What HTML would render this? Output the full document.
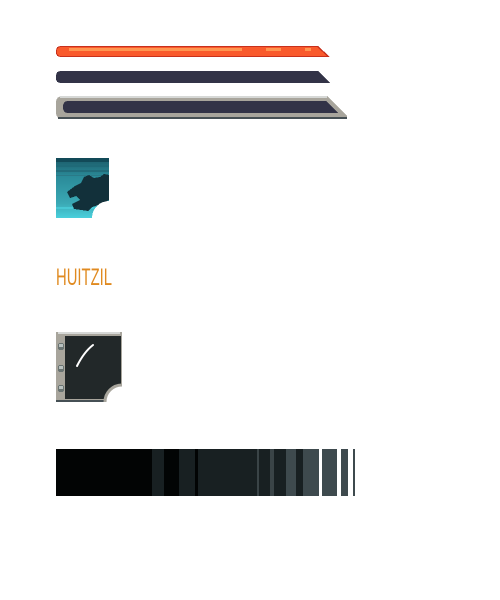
<!DOCTYPE html>
<html><head><meta charset="utf-8"><style>
html,body{margin:0;padding:0;background:#fff;width:500px;height:600px;overflow:hidden}
svg{position:absolute;left:0;top:0}
</style></head><body>
<svg width="500" height="600" viewBox="0 0 500 600" xmlns="http://www.w3.org/2000/svg" shape-rendering="crispEdges">
<!-- bar 1 -->
<path d="M61,46 H318 L330,57 H61 Q56,57 56,52 V51 Q56,46 61,46 Z" fill="#c8301c"/>
<path d="M61,47 H317 L327,56 H61 Q57,56 57,52 V51 Q57,47 61,47 Z" fill="#f95a2c"/>
<rect x="69" y="48" width="173" height="3" fill="#ff9550"/>
<rect x="266" y="48" width="15" height="3" fill="#ff9550"/>
<rect x="305" y="48" width="6" height="3" fill="#ff9550"/>
<!-- bar 2 -->
<path d="M61,71 H318 L330,83 H61 Q56,83 56,78 V76 Q56,71 61,71 Z" fill="#323347"/>
<!-- bar 3 -->
<path d="M63,96 H327 L347,116 V119 H63 Q56,119 56,112 V103 Q56,96 63,96 Z" fill="#a8a59c"/>
<rect x="60" y="96" width="267" height="2" fill="#d6d8d6"/>
<rect x="58" y="117" width="289" height="2" fill="#465055"/>
<path d="M68,101 H326 L338,113 H68 Q63,113 63,107 Q63,101 68,101 Z" fill="#323347"/>
<defs>
<linearGradient id="tg" x1="0" y1="0" x2="0" y2="1">
<stop offset="0" stop-color="#1a5a68"/><stop offset="0.3" stop-color="#2a8a98"/><stop offset="0.75" stop-color="#3aa8b4"/><stop offset="1" stop-color="#4ad0dc"/>
</linearGradient>
<mask id="m1"><rect x="0" y="0" width="500" height="600" fill="#fff"/><circle cx="109" cy="218" r="17" fill="#000"/></mask>
<mask id="m2"><rect x="0" y="0" width="500" height="600" fill="#fff"/><circle cx="122" cy="402" r="16" fill="#000"/></mask>
<clipPath id="c2"><rect x="56" y="332" width="66" height="70"/></clipPath>
</defs>
<g mask="url(#m1)">
<rect x="56" y="158" width="53" height="60" fill="url(#tg)"/>
<rect x="56" y="158" width="53" height="4" fill="#124a58"/>
<rect x="56" y="165" width="53" height="2" fill="#1f6a78"/>
<rect x="56" y="170" width="53" height="2" fill="#226c7a"/>
<rect x="56" y="175" width="53" height="1" fill="#2a7a88"/>
<rect x="56" y="207" width="53" height="2" fill="#48c8d4"/>
<path d="M67,192 L75,186 L81,183 L84,177 L89,175 L94,178 L100,177 L104,174 L109,175 V200 L101,204 L92,207 L88,211 L74,209 L72,204 L80,200 L76,196 L70,198 Z" fill="#12303a"/>
</g>
<!-- text -->
<text x="56" y="285" font-family="Liberation Sans Narrow, Liberation Sans, sans-serif" font-size="24" fill="#e08a20" textLength="56" lengthAdjust="spacingAndGlyphs" shape-rendering="auto">HUITZIL</text>
<!-- frame -->
<g mask="url(#m2)">
<rect x="56" y="332" width="66" height="70" fill="#a8a59c"/>
<rect x="58" y="332" width="62" height="2" fill="#d6d8d6"/>
<rect x="56" y="400" width="60" height="2" fill="#465055"/>
<rect x="65" y="336" width="56" height="63" fill="#222829"/>
</g>
<g clip-path="url(#c2)"><circle cx="122" cy="402" r="17" fill="none" stroke="#a8a59c" stroke-width="3" shape-rendering="auto"/></g>
<rect x="58" y="343" width="6" height="7" rx="2" fill="#6a7472"/><rect x="59" y="344" width="4" height="3" fill="#b8c0be"/>
<rect x="58" y="365" width="6" height="7" rx="2" fill="#6a7472"/><rect x="59" y="366" width="4" height="3" fill="#b8c0be"/>
<rect x="58" y="385" width="6" height="7" rx="2" fill="#6a7472"/><rect x="59" y="386" width="4" height="3" fill="#b8c0be"/>
<path d="M93,345 Q84,352 77,366" stroke="#fff" stroke-width="2" fill="none" stroke-linecap="round" shape-rendering="auto"/>
<!-- stripes -->
<rect x="56" y="449" width="96" height="47" fill="#020404"/>
<rect x="152" y="449" width="12" height="47" fill="#182022"/>
<rect x="164" y="449" width="15" height="47" fill="#020404"/>
<rect x="179" y="449" width="16" height="47" fill="#182022"/>
<rect x="195" y="449" width="3" height="47" fill="#020404"/>
<rect x="198" y="449" width="59" height="47" fill="#182022"/>
<rect x="257" y="449" width="2" height="47" fill="#3a4447"/>
<rect x="259" y="449" width="11" height="47" fill="#182022"/>
<rect x="270" y="449" width="4" height="47" fill="#3a4447"/>
<rect x="274" y="449" width="12" height="47" fill="#182022"/>
<rect x="286" y="449" width="10" height="47" fill="#3e4a4e"/>
<rect x="296" y="449" width="7" height="47" fill="#182022"/>
<rect x="303" y="449" width="16" height="47" fill="#3e4a4e"/>
<rect x="322" y="449" width="15" height="47" fill="#3e4a4e"/>
<rect x="341" y="449" width="7" height="47" fill="#3e4a4e"/>
<rect x="353" y="449" width="2" height="47" fill="#3e4a4e"/>
</svg>
</body></html>
